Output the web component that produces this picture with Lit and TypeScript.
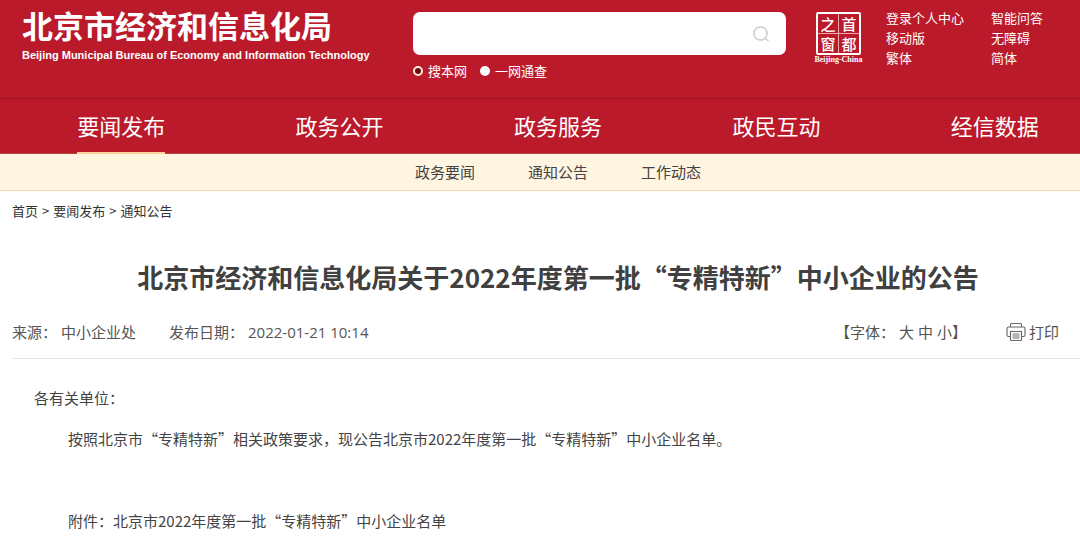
import { LitElement, html, css } from "lit";
import { customElement, property, state } from "lit/decorators.js";

@customElement("site-header")
class SiteHeader extends LitElement {
  @state() private scope = "site";

  static styles = css`
    :host { display: block; background: #bb1a2b; border-bottom: 1px solid #9c1424; color: #fff; }
    .bar { display: grid; grid-template-columns: 391px minmax(200px, 1fr) 49px 217px; align-items: start; padding: 8px 0 17px 22px; }
    .brand { display: flex; flex-direction: column; color: inherit; text-decoration: none; }
    .name { font-size: 31px; line-height: 34px; font-weight: 700; white-space: nowrap; }
    .latin { font: 700 11px/26px "Liberation Sans", Arial, sans-serif; white-space: nowrap; }
    .search { padding-top: 4px; margin-right: 28px; }
    .box { display: flex; align-items: center; height: 43px; background: #fff; border-radius: 7px; }
    .field { flex: 1; min-width: 0; height: 100%; box-sizing: border-box; border: 0; outline: 0; background: none; padding: 0 16px; font: inherit; font-size: 15px; }
    .go { display: flex; border: 0; background: none; padding: 0 16px; color: #ccc; }
    .scopes { display: flex; gap: 13px; padding-top: 6px; }
    .scope { display: flex; align-items: center; gap: 5px; font-size: 13px; line-height: 20px; }
    .radio { appearance: none; width: 10px; height: 10px; margin: 0; border-radius: 50%; background: #fff; }
    .radio:checked { background: #6d0a14; border: 2px solid #fbeedd; }
    .seal { display: flex; flex-direction: column; align-items: center; padding-top: 4px; color: inherit; text-decoration: none; }
    .stamp { display: grid; grid-template-columns: 20px 20px; grid-template-rows: 19px 19px; gap: 1px; border: 2px solid #fff; border-radius: 2px; }
    .glyph { display: flex; align-items: center; justify-content: center; font-size: 15px; line-height: 18px; font-weight: 500; }
    .glyph:nth-child(odd) { border-right: 1px solid #e8a5ac; margin-right: -1px; }
    .glyph:nth-child(-n + 2) { border-bottom: 1px solid #e8a5ac; margin-bottom: -1px; }
    .caption { font: 700 8px/9px "Liberation Serif", serif; white-space: nowrap; }
    .links { display: grid; grid-template-columns: 105px auto; padding-left: 23px; font-size: 13px; line-height: 20px; }
    .link { color: inherit; text-decoration: none; white-space: nowrap; }
  `;

  render() {
    const links = ["登录个人中心", "智能问答", "移动版", "无障碍", "繁体", "简体"];
    const scopes = [["site", "搜本网"], ["all", "一网通查"]];
    return html`
      <header class="bar">
        <a class="brand" href="#">
          <span class="name">北京市经济和信息化局</span>
          <span class="latin">Beijing Municipal Bureau of Economy and Information Technology</span>
        </a>
        <form class="search" @submit=${(e: Event) => e.preventDefault()}>
          <div class="box">
            <input class="field" type="text" aria-label="搜索" />
            <button class="go" aria-label="搜索">
              <svg width="18" height="18" viewBox="0 0 18 18" fill="none" stroke="currentColor" stroke-width="1.5">
                <circle cx="8.5" cy="8.5" r="6.6" />
                <path d="M13.2 13.2 16.5 16" />
              </svg>
            </button>
          </div>
          <div class="scopes">
            ${scopes.map(([id, label]) => html`
              <label class="scope">
                <input class="radio" type="radio" name="scope" .checked=${this.scope === id} @change=${() => (this.scope = id)} />
                ${label}
              </label>`)}
          </div>
        </form>
        <a class="seal" href="#">
          <span class="stamp">
            ${["之", "首", "窗", "都"].map((g) => html`<span class="glyph">${g}</span>`)}
          </span>
          <span class="caption">Beijing-China</span>
        </a>
        <nav class="links">
          ${links.map((l) => html`<a class="link" href="#">${l}</a>`)}
        </nav>
      </header>
    `;
  }
}

@customElement("site-nav")
class SiteNav extends LitElement {
  @property() current = "要闻发布";

  static styles = css`
    :host { display: block; }
    .main { background: #bb1a2b; border-bottom: 1px solid #b04a40; }
    .tabs { display: grid; grid-template-columns: repeat(5, 1fr); justify-items: center; margin: 0 -24px 0 12px; }
    .tab { box-sizing: border-box; height: 54px; margin-top: 1px; margin-bottom: -1px; border-bottom: 2px solid transparent; color: #fff; font-size: 22px; line-height: 50px; text-decoration: none; white-space: nowrap; }
    .tab.on { border-color: #fbd39a; }
    .sub { background: #fff5e1; border-bottom: 1px solid #efd6ac; }
    .items { display: flex; justify-content: center; gap: 53px; margin: 0 -24px 0 12px; }
    .item { color: #444; font-size: 15px; line-height: 36px; text-decoration: none; white-space: nowrap; }
  `;

  render() {
    return html`
      <nav class="main"><div class="tabs">
        ${["要闻发布", "政务公开", "政务服务", "政民互动", "经信数据"].map((t) => html`
          <a class="tab ${t === this.current ? "on" : ""}" href="#">${t}</a>`)}
      </div></nav>
      <nav class="sub"><div class="items">
        ${["政务要闻", "通知公告", "工作动态"].map((t) => html`<a class="item" href="#">${t}</a>`)}
      </div></nav>
    `;
  }
}

@customElement("notice-article")
class NoticeArticle extends LitElement {
  static styles = css`
    :host { display: block; margin: 0 -24px 0 12px; color: #444; }
    .crumbs { display: flex; gap: 4px; font-size: 13px; line-height: 20px; padding-top: 10px; color: #333; }
    a { color: inherit; text-decoration: none; }
    .title { margin: 36px 0 0; text-align: center; font-size: 26px; line-height: 40px; font-weight: 700; color: #404040; white-space: nowrap; }
    .meta { display: flex; align-items: center; font-size: 15px; line-height: 24px; padding: 23px 45px 14px 0; border-bottom: 1px solid #e6e6e6; white-space: nowrap; color: #555; }
    .source { margin-right: 33px; }
    .pair { display: flex; gap: 4px; }
    .time { font-family: "Open Sans", sans-serif; }
    .sizes { display: flex; gap: 4px; margin-left: auto; }
    .plain { border: 0; padding: 0; background: none; font: inherit; color: inherit; }
    .print { display: flex; align-items: center; gap: 3px; margin-left: 39px; }
    .body { padding-top: 27px; font-size: 15px; line-height: 24px; }
    .hail { margin: 0 0 17px 22px; }
    .para { margin: 0 0 58px 56px; white-space: nowrap; }
    .annex { margin: 0 0 4px 56px; white-space: nowrap; }
  `;

  render() {
    return html`
      <nav class="crumbs"><a href="#">首页</a><span>&gt;</span><a href="#">要闻发布</a><span>&gt;</span><a href="#">通知公告</a></nav>
      <article>
        <h1 class="title">北京市经济和信息化局关于2022年度第一批“专精特新”中小企业的公告</h1>
        <div class="meta">
          <span class="pair source"><span>来源：</span><span>中小企业处</span></span>
          <span class="pair"><span>发布日期：</span><time class="time" datetime="2022-01-21T10:14">2022-01-21 10:14</time></span>
          <span class="sizes">
            <span>【字体：</span>
            <button class="plain">大</button>
            <button class="plain">中</button>
            <span><button class="plain">小</button>】</span>
          </span>
          <button class="plain print">
            <svg width="20" height="20" viewBox="0 0 20 20" fill="none" stroke="#666" stroke-width="1.1">
              <path d="M4.5 5V2.5a1 1 0 0 1 1-1h9a1 1 0 0 1 1 1V5" />
              <path d="M4 14.5H2.5A1.5 1.5 0 0 1 1 13V6.5A1.5 1.5 0 0 1 2.5 5h15A1.5 1.5 0 0 1 19 6.5V13a1.5 1.5 0 0 1-1.5 1.5H16" />
              <path d="M4.5 9.5h11v8a1 1 0 0 1-1 1h-9a1 1 0 0 1-1-1z" />
              <path d="M6.5 12h7M6.500 14h7M6.500 16h7" />
            </svg>
            打印
          </button>
        </div>
        <div class="body">
          <p class="hail">各有关单位：</p>
          <p class="para">按照北京市“专精特新”相关政策要求，现公告北京市2022年度第一批“专精特新”中小企业名单。</p>
          <p class="annex">附件：<a href="#">北京市2022年度第一批“专精特新”中小企业名单</a></p>
        </div>
      </article>
    `;
  }
}

@customElement("app-root")
class AppRoot extends LitElement {
  static styles = css`
    :host { display: block; overflow: hidden; background: #fff; font-family: "Noto Sans CJK SC", sans-serif; }
  `;

  render() {
    return html`
      <site-header></site-header>
      <site-nav></site-nav>
      <notice-article lang="zh-CN"></notice-article>
    `;
  }
}
